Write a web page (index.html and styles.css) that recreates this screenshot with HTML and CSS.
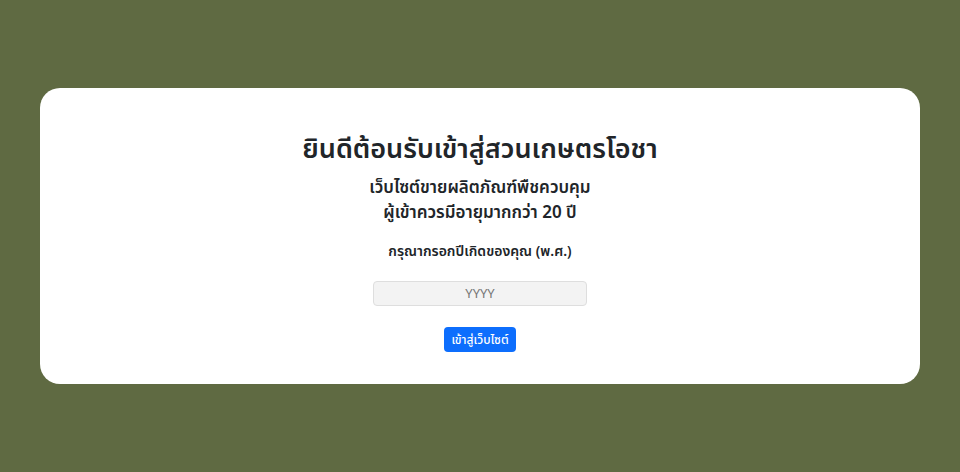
FILE: index.html
```html
<!DOCTYPE html>
<html lang="th">
<head>
<meta charset="utf-8">
<title>สวนเกษตรโอชา</title>
<link rel="stylesheet" href="styles.css">
</head>
<body>
<main class="page">
  <section class="card">
    <h1 class="title">ยินดีต้อนรับเข้าสู่สวนเกษตรโอชา</h1>
    <p class="subtitle">เว็บไซต์ขายผลิตภัณฑ์พืชควบคุม</p>
    <p class="subtitle">ผู้เข้าควรมีอายุมากกว่า 20 ปี</p>
    <form class="form">
      <label class="label" for="year">กรุณากรอกปีเกิดของคุณ (พ.ศ.)</label>
      <input class="input" id="year" type="text" placeholder="YYYY">
      <button class="button" type="button">เข้าสู่เว็บไซต์</button>
    </form>
  </section>
</main>
</body>
</html>
```
FILE: styles.css
```css
html, body {
  margin: 0;
  padding: 0;
  height: 100%;
}
body {
  background: #5f6a42;
  font-family: "Noto Sans Thai", "Noto Sans", "DejaVu Sans", sans-serif;
  color: #212529;
}
.page {
  padding: 88px 40px 0;
}
.card {
  background: #ffffff;
  border-radius: 20px;
  height: 296px;
  box-sizing: border-box;
  padding-top: 38px;
  display: flex;
  flex-direction: column;
  align-items: center;
}
.title {
  margin: 0 0 2px;
  font-size: 27px;
  font-weight: 600;
  line-height: 48px;
}
.subtitle {
  margin: 0;
  font-size: 17px;
  font-weight: 600;
  line-height: 25px;
}
.form {
  display: flex;
  flex-direction: column;
  align-items: center;
  margin-top: 14px;
}
.label {
  font-size: 14px;
  font-weight: 600;
  line-height: 24px;
}
.input {
  margin-top: 17px;
  width: 214px;
  height: 25px;
  box-sizing: border-box;
  background: #f3f3f3;
  border: 1px solid #dedede;
  border-radius: 4px;
  text-align: center;
  font-family: inherit;
  font-size: 13px;
  color: #555;
}
.input::placeholder {
  color: #777;
}
.button {
  margin-top: 21px;
  height: 25px;
  padding: 0 7px;
  background: #0d6efd;
  color: #fff;
  border: none;
  border-radius: 4px;
  font-family: inherit;
  font-size: 12px;
  font-weight: 500;
}
```
